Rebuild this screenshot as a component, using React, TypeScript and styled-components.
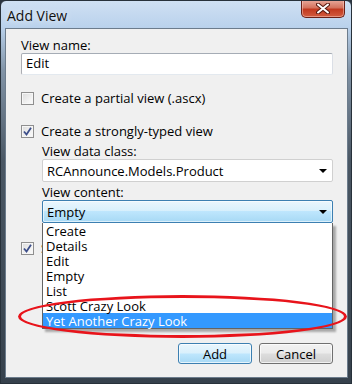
import React from "react";
import styled, { createGlobalStyle } from "styled-components";

const GlobalStyle = createGlobalStyle`
  html, body {
    margin: 0;
    padding: 0;
    background: #2b3540;
  }
  body {
    font-family: "Segoe UI", "Open Sans", "Noto Sans", sans-serif;
    font-size: 13px;
    color: #000;
  }
`;

const Window = styled.div`
  width: 352px;
  height: 384px;
  box-sizing: border-box;
  border: 1px solid #27313a;
  border-radius: 6px 6px 0 0;
  background: linear-gradient(
    to bottom,
    #cfe0f3 0px,
    #bad2ec 26px,
    #8193a6 70px,
    #4a5764 160px,
    #36414c 100%
  );
  display: flex;
  flex-direction: column;
  overflow: hidden;
`;

const TitleBar = styled.div`
  height: 27px;
  display: flex;
  align-items: flex-start;
  justify-content: space-between;
  padding-left: 6px;
  padding-right: 6px;
`;

const Title = styled.div`
  font-size: 14px;
  line-height: 14px;
  margin-top: 8px;
  color: #101010;
  text-shadow: 0 0 6px rgba(255, 255, 255, 0.9);
`;

const CloseButton = styled.div`
  width: 44px;
  height: 18px;
  margin-top: -1px;
  box-sizing: border-box;
  border: 1px solid #6a2016;
  border-top: none;
  border-radius: 0 0 5px 5px;
  background: linear-gradient(
    to bottom,
    #e9aa9c 0%,
    #d4735e 45%,
    #c2391f 55%,
    #d25c3f 100%
  );
  box-shadow: inset 0 0 0 1px rgba(255, 220, 210, 0.45);
  display: flex;
  align-items: center;
  justify-content: center;
`;

const Client = styled.div`
  position: relative;
  flex: 1;
  margin: 0 3px 5px 4px;
  border: 1px solid #6c7c8c;
  background: #f0f0f0;
  padding: 8px 14px 13px 15px;
  display: flex;
  flex-direction: column;
`;

const Label = styled.div<{ $top?: number }>`
  height: 16px;
  line-height: 16px;
  margin-top: ${(p) => p.$top ?? 0}px;
  white-space: nowrap;
`;

const TextBox = styled.div`
  height: 22px;
  box-sizing: border-box;
  border: 1px solid #abadb3;
  border-top-color: #a5acb5;
  border-bottom-color: #e3e9ef;
  border-right-color: #dbdfe6;
  background: #fff;
  padding-left: 4px;
  line-height: 19px;
  border-radius: 2px;
`;

const CheckRow = styled.div<{ $top: number }>`
  height: 16px;
  margin-top: ${(p) => p.$top}px;
  display: flex;
  align-items: center;
  gap: 7px;
  white-space: nowrap;
`;

const Box = styled.div`
  width: 13px;
  height: 13px;
  box-sizing: border-box;
  border: 1px solid #8f8f8f;
  background: linear-gradient(135deg, #dcdcdc 0%, #f4f4f4 70%, #fbfbfb 100%);
  box-shadow: inset 0 0 0 1px #f6f6f6;
  display: flex;
  align-items: center;
  justify-content: center;
  flex-shrink: 0;
`;

const HiddenLabel = styled.span`
  width: 6px;
  overflow: hidden;
`;

const Group = styled.div`
  padding-left: 21px;
  display: flex;
  flex-direction: column;
`;

const ComboWrap = styled.div`
  position: relative;
`;

const Combo = styled.div<{ $focused?: boolean }>`
  height: 23px;
  box-sizing: border-box;
  border: 1px solid ${(p) => (p.$focused ? "#3c7fb1" : "#d0d0d0")};
  border-radius: 2px;
  background: ${(p) =>
    p.$focused
      ? "linear-gradient(to bottom, #eaf6fd 0%, #d9f0fc 45%, #bee6fd 50%, #a7d9f5 100%)"
      : "#fff"};
  box-shadow: ${(p) => (p.$focused ? "inset 0 0 0 1px rgba(255,255,255,0.6)" : "none")};
  display: flex;
  align-items: center;
  justify-content: space-between;
  padding: 0 5px 0 4px;
`;

const Arrow = styled.div`
  width: 0;
  height: 0;
  border-left: 4px solid transparent;
  border-right: 4px solid transparent;
  border-top: 4px solid #000;
  margin-top: 1px;
`;

const DropList = styled.div`
  position: absolute;
  top: 100%;
  left: 0;
  right: 0;
  z-index: 2;
  box-sizing: border-box;
  border: 1px solid #646464;
  border-top: none;
  background: #fff;
  box-shadow: 3px 3px 2px rgba(0, 0, 0, 0.3);
`;

const Item = styled.div<{ $selected?: boolean }>`
  height: 15px;
  line-height: 16px;
  padding-left: 3px;
  background: ${(p) => (p.$selected ? "#3399ff" : "transparent")};
  color: ${(p) => (p.$selected ? "#fff" : "#000")};
  white-space: nowrap;
`;

const Ring = styled.div`
  position: absolute;
  left: 12px;
  top: 266px;
  width: 329px;
  height: 43px;
  box-sizing: border-box;
  border: 3px solid #e8141b;
  border-radius: 50%;
  z-index: 3;
  pointer-events: none;
`;

const ButtonRow = styled.div`
  margin-top: auto;
  display: flex;
  justify-content: flex-end;
  gap: 7px;
`;

const Button = styled.div<{ $default?: boolean }>`
  width: 74px;
  height: 21px;
  box-sizing: border-box;
  border: 1px solid ${(p) => (p.$default ? "#3c7fb1" : "#707070")};
  border-radius: 3px;
  background: ${(p) =>
    p.$default
      ? "linear-gradient(to bottom, #eaf6fd 0%, #d9f0fc 48%, #bee6fd 52%, #a7d9f5 100%)"
      : "linear-gradient(to bottom, #f2f2f2 0%, #ebebeb 48%, #dddddd 52%, #cfcfcf 100%)"};
  box-shadow: inset 0 0 0 1px rgba(255, 255, 255, 0.7);
  display: flex;
  align-items: center;
  justify-content: center;
`;

const Check = () => (
  <svg width="9" height="9" viewBox="0 0 9 9">
    <path d="M1 4.5 L3.5 7.5 L8 0.8" fill="none" stroke="#3d4f8a" strokeWidth="1.8" />
  </svg>
);

const CloseGlyph = () => (
  <svg width="14" height="11" viewBox="0 0 14 11">
    <path d="M2 1.5 L12 9.5 M12 1.5 L2 9.5" stroke="#5a1a10" strokeWidth="4" strokeLinecap="round" />
    <path d="M2 1.5 L12 9.5 M12 1.5 L2 9.5" stroke="#ffffff" strokeWidth="2" strokeLinecap="round" />
  </svg>
);

const contentItems = ["Create", "Details", "Edit", "Empty", "List", "Scott Crazy Look", "Yet Another Crazy Look"];

export default function App() {
  return (
    <>
      <GlobalStyle />
      <Window>
        <TitleBar>
          <Title>Add View</Title>
          <CloseButton>
            <CloseGlyph />
          </CloseButton>
        </TitleBar>
        <Client>
          <Label>View name:</Label>
          <TextBox>Edit</TextBox>

          <CheckRow $top={15}>
            <Box />
            <span>Create a partial view (.ascx)</span>
          </CheckRow>

          <CheckRow $top={17}>
            <Box>
              <Check />
            </Box>
            <span>Create a strongly-typed view</span>
          </CheckRow>

          <Group>
            <Label $top={4}>View data class:</Label>
            <Combo>
              <span>RCAnnounce.Models.Product</span>
              <Arrow />
            </Combo>
            <Label $top={2}>View content:</Label>
            <ComboWrap>
              <Combo $focused>
                <span>Empty</span>
                <Arrow />
              </Combo>
              <DropList>
                {contentItems.map((it, i) => (
                  <Item key={it} $selected={i === contentItems.length - 1}>
                    {it}
                  </Item>
                ))}
              </DropList>
            </ComboWrap>
          </Group>

          <CheckRow $top={17}>
            <Box>
              <Check />
            </Box>
            <HiddenLabel>S</HiddenLabel>
          </CheckRow>

          <ButtonRow>
            <Button $default>Add</Button>
            <Button>Cancel</Button>
          </ButtonRow>

          <Ring />
        </Client>
      </Window>
    </>
  );
}
